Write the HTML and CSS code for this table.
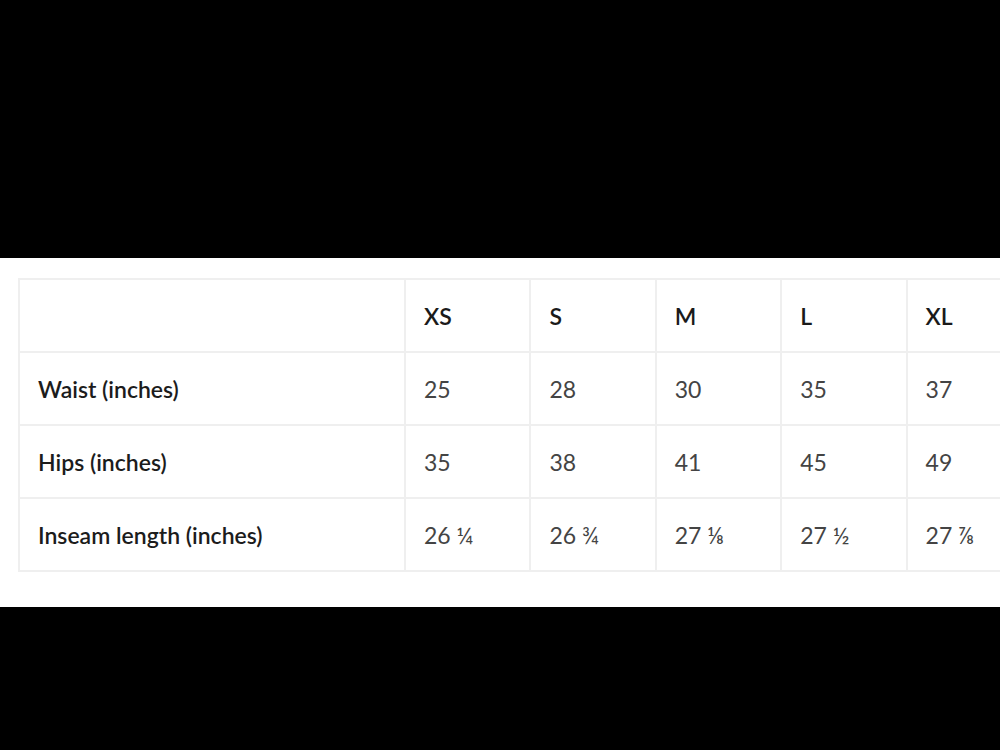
FILE: index.html
```html
<!DOCTYPE html>
<html>
<head>
<meta charset="utf-8">
<link rel="stylesheet" href="styles.css">
</head>
<body>
<div class="band top"></div>
<div class="sheet">
  <table class="sizes">
    <colgroup>
      <col class="c-label"><col class="c-size"><col class="c-size"><col class="c-size"><col class="c-size"><col class="c-size">
    </colgroup>
    <tr class="head">
      <th></th><th>XS</th><th>S</th><th>M</th><th>L</th><th>XL</th>
    </tr>
    <tr>
      <th class="label">Waist (inches)</th><td>25</td><td>28</td><td>30</td><td>35</td><td>37</td>
    </tr>
    <tr>
      <th class="label">Hips (inches)</th><td>35</td><td>38</td><td>41</td><td>45</td><td>49</td>
    </tr>
    <tr>
      <th class="label">Inseam length (inches)</th><td>26 ¼</td><td>26 ¾</td><td>27 ⅛</td><td>27 ½</td><td>27 ⅞</td>
    </tr>
  </table>
</div>
<div class="band bottom"></div>
</body>
</html>
```
FILE: styles.css
```css
html, body {
  margin: 0;
  padding: 0;
  background: #000;
  width: 1000px;
  height: 750px;
  overflow: hidden;
  font-family: Lato, "Liberation Sans", sans-serif;
}
.band.top { height: 258px; background: #000; }
.band.bottom { height: 143px; background: #000; }
.sheet {
  height: 349px;
  background: #fff;
  padding: 20px 0 0 18px;
  box-sizing: border-box;
  overflow: hidden;
}
.sizes {
  border-collapse: collapse;
  table-layout: fixed;
  width: 1013px;
}
.c-label { width: 386px; }
.c-size { width: 125.4px; }
.sizes th, .sizes td {
  border: 2px solid #efefef;
  height: 73px;
  box-sizing: border-box;
  padding: 0 0 0 18px;
  text-align: left;
  font-size: 23px;
  vertical-align: middle;
}
.sizes th { color: #1c1c1c; font-weight: 600; }
.sizes .head th { color: #1a1a1a; }
.sizes td { color: #444; font-weight: 400; }
```
